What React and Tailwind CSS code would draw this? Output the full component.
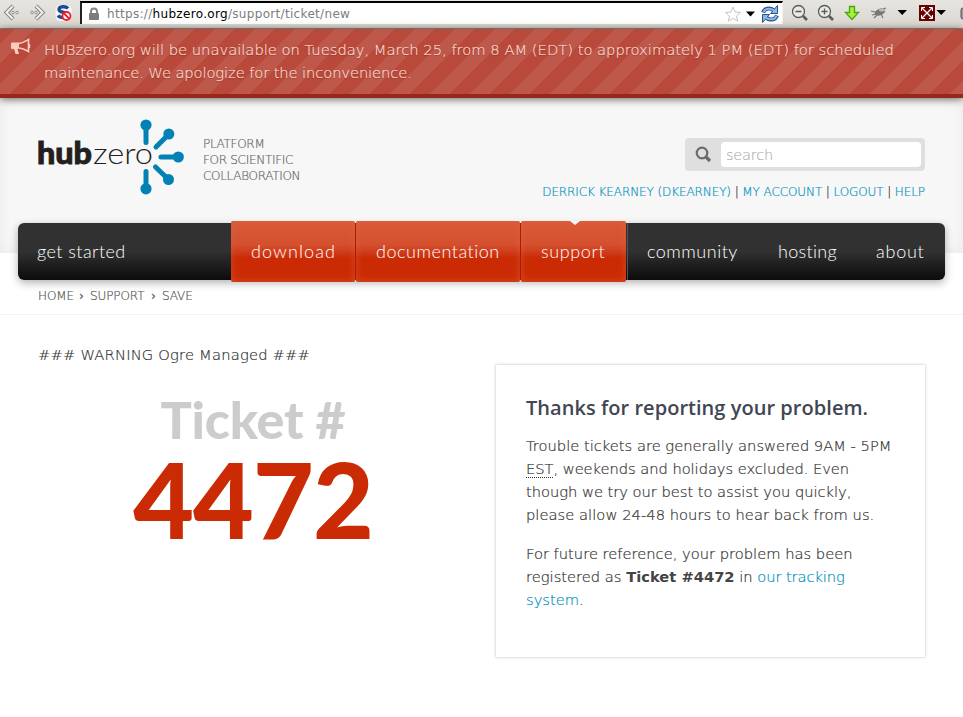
import React from "react";

function Toolbar() {
  return (
    <div className="flex h-[29px] items-center border-b border-[#8c8b86] bg-linear-to-b from-[#e6e5e0] to-[#d9d7cf]">
      <svg className="h-[28px] w-[80px] shrink-0" viewBox="0 0 80 28" fill="none">
        <g stroke="#858581" strokeWidth="4">
          <path d="M13 6 L6.500 12.500 L13 19" />
          <path d="M36 6 L42.500 12.500 L36 19" />
        </g>
        <g stroke="#f2f1ee" strokeWidth="2">
          <path d="M12.700 6.300 L6.500 12.500 L12.700 18.700" />
          <path d="M36.300 6.300 L42.500 12.500 L36.300 18.700" />
        </g>
        <g stroke="#858581" strokeWidth="0.900" fill="#f2f1ee">
          <circle cx="13" cy="12.500" r="1.300" />
          <circle cx="17" cy="12.500" r="1.300" />
          <circle cx="36" cy="12.500" r="1.300" />
          <circle cx="32" cy="12.500" r="1.300" />
        </g>
        <rect x="55.500" y="5" width="16" height="16" rx="5" fill="#f5f7fa" />
        <path d="M68 8.500 C66 6 59 6 59 9.500 C59 13 67 11.500 67 15 C67 18.500 60 18 58 15.500" stroke="#1d4a90" strokeWidth="3.400" />
        <circle cx="66.500" cy="16" r="4" fill="#fff" stroke="#e8202a" strokeWidth="1.800" />
        <path d="M64 13.500 L69 18.500" stroke="#e8202a" strokeWidth="1.800" />
      </svg>
      <div className="mt-[-3px] flex h-[23px] w-[703px] shrink-0 items-center border-t-2 border-r border-l-2 border-t-black border-r-[#f4f3f0] border-l-[#222] bg-white font-['DejaVu_Sans'] text-[12px]">
        <svg className="ml-[6px] h-[14px] w-[12px]" viewBox="0 0 12 14">
          <path d="M3 7 V4.500 a3 3 0 0 1 6 0 V7" fill="none" stroke="#868686" strokeWidth="2" />
          <rect x="1" y="6" width="10" height="7" rx="1" fill="#7c7c7c" />
        </svg>
        <span className="ml-[7px] tracking-[0.32px] whitespace-nowrap text-[#7d7d7d]">
          https://<span className="text-black">hubzero.org</span>/support/ticket/new
        </span>
        <svg className="ml-auto h-[20px] w-[58px]" viewBox="0 0 58 20">
          <path d="M9 3 L11.200 8 L16.500 8.500 L12.500 12 L13.700 17 L9 14.400 L4.300 17 L5.500 12 L1.500 8.500 L6.800 8Z" fill="#fff" stroke="#c4c4c4" />
          <path d="M22 7.500 h9 l-4.500 5z" fill="#000" />
          <g fill="none" stroke="#26548f" strokeWidth="4">
            <path d="M39 8.500 C41 3.500 47 3.500 50 6.500" />
            <path d="M53 11.500 C51 16.500 45 16.500 42 13.500" />
          </g>
          <path d="M53.500 1.500 V9.500 H46.500Z M38.500 18.500 V10.500 H45.500Z" fill="#8db8e6" stroke="#26548f" strokeWidth="1" />
          <g fill="none" stroke="#8db8e6" strokeWidth="2">
            <path d="M39.500 8.200 C41 4 47 3.500 51 7" />
            <path d="M52.500 11.800 C51 16 45 16.500 41 13" />
          </g>
        </svg>
      </div>
      <svg className="h-[28px] w-[180px] shrink-0" viewBox="783 0 180 28" fill="none">
        <g stroke="#5a5c58" strokeWidth="1.300">
          <circle cx="798.500" cy="11.500" r="6" fill="#e9e9e6" />
          <circle cx="824.500" cy="11.500" r="6" fill="#e9e9e6" />
          <path d="M795.500 11.500 h6 M821.500 11.500 h6 M824.500 8.500 v6" />
          <path d="M803 16 L807 20 M829 16 L833 20" strokeWidth="2.600" />
        </g>
        <path d="M849.500 6.500 h5 v6 h4 L852 19.500 L845.500 12.500 h4z" fill="#a4f03a" stroke="#4fa40c" strokeWidth="1.300" />
        <ellipse cx="880" cy="12" rx="5.500" ry="3.300" fill="#777" transform="rotate(-20 880 12)" />
        <path d="M871 11 l6 1.500 M872 15 l5 -1 M877 15 l-3 3 M881 14 l2 4 M883 9 l3 -1" stroke="#777" strokeWidth="1.200" />
        <ellipse cx="882" cy="10" rx="3" ry="1.500" fill="#bbb" />
        <path d="M897.500 10 h9.500 l-4.800 5z M936.500 10 h9.500 l-4.800 5z" fill="#000" />
        <rect x="919" y="5" width="16" height="16" fill="#6b0000" />
        <path d="M922 8 L932 18 M932 8 L922 18" stroke="#fff" strokeWidth="1.300" />
        <path d="M921.500 11 V7.500 H925 M929 7.500 H932.500 V11 M932.500 15 V18.500 H929 M925 18.500 H921.500 V15" stroke="#fff" />
        <rect x="961" y="8" width="6" height="11" rx="2" fill="#999" stroke="#555" />
      </svg>
    </div>
  );
}

function Banner() {
  return (
    <div className="relative z-10 flex h-[69px] border-b-4 border-[#97281a] bg-[#b94a3b] bg-[linear-gradient(135deg,rgba(255,255,255,0.08)_25%,transparent_25%,transparent_50%,rgba(255,255,255,0.08)_50%,rgba(255,255,255,0.08)_75%,transparent_75%)] bg-[size:40px_40px] bg-[position:15px_0] shadow-[0_1px_8px_rgba(0,0,0,0.6)]">
      <svg className="mt-[9px] ml-[10px] h-[18px] w-[21px] shrink-0" viewBox="0 0 21 18">
        <path d="M1 6 C1 5 1.500 4.500 2.500 4.500 H9 V10.500 L7.500 11 L9 16 H5.500 L4 11 H2.500 C1.500 11 1 10.500 1 9.500Z" fill="#fdcabd" />
        <path d="M9 5.500 C13 5 16 3 18.500 1.500 V13.500 C16 12 13 10.300 9 10" fill="none" stroke="#fdcabd" strokeWidth="1.700" />
        <path d="M19.500 6 v4" stroke="#fdcabd" strokeWidth="1.500" />
      </svg>
      <p className="mt-[9px] ml-[13px] font-['DejaVu_Sans'] text-[14.72px] leading-[23px] font-extralight whitespace-nowrap text-[#ffd9cf] [-webkit-text-stroke:0.2px] [text-shadow:0_1px_1px_rgba(0,0,0,0.3)]">
        HUBzero.org will be unavailable on Tuesday, March 25, from 8 AM (EDT) to approximately 1 PM (EDT) for scheduled
        <br />
        <span className="tracking-[-0.11px]">maintenance. We apologize for the inconvenience.</span>
      </p>
    </div>
  );
}

function Logo() {
  return (
    <svg className="h-[78px] w-[150px] shrink-0" viewBox="37 118 150 78">
      <text x="37" y="164" className="font-['Lato'] text-[31px] font-black" fill="#231f20" stroke="#231f20" strokeWidth="0.900" textLength="55" lengthAdjust="spacingAndGlyphs">hub</text>
      <text x="93" y="164" className="font-['Lato'] text-[30px] font-light" fill="#231f20" textLength="60" lengthAdjust="spacingAndGlyphs">zero</text>
      <g stroke="#0282b4" strokeWidth="5" strokeLinecap="round">
        <path d="M146 126 V142.500 M169 134 L156 147 M178 157 H161 M146 189 V171.500 M168 179 L155.500 167" />
      </g>
      <g fill="#0282b4">
        <circle cx="146" cy="125" r="5.600" />
        <circle cx="168.800" cy="134" r="5.500" />
        <circle cx="178.300" cy="157" r="5.600" />
        <circle cx="168.500" cy="179.500" r="5.500" />
        <circle cx="146" cy="188.800" r="5.600" />
      </g>
    </svg>
  );
}

function Header() {
  return (
    <header className="h-[155px] bg-[#f7f7f7] shadow-[inset_0_0_14px_rgba(0,0,0,0.06)]">
      <div className="flex pt-[20px] pr-[38px] pl-[37px]">
        <Logo />
        <p className="mt-[18px] ml-[16px] font-['DejaVu_Sans'] text-[12px] leading-[16px] font-extralight tracking-[-0.3px] text-[#666] [-webkit-text-stroke:0.2px]">
          PLATFORM
          <br />
          FOR SCIENTIFIC
          <br />
          COLLABORATION
        </p>
        <div className="mt-[20px] ml-auto flex flex-col items-end">
          <div className="flex h-[33px] w-[240px] items-center rounded-[4px] bg-[#dfdfdf] pr-1 pl-[10px]">
            <svg className="h-[17px] w-[17px]" viewBox="0 0 17 17" fill="none" stroke="#6b6b6b">
              <circle cx="7" cy="7" r="5.300" strokeWidth="2.200" />
              <path d="M10.500 10.500 L15 15" strokeWidth="3.200" />
            </svg>
            <div className="ml-auto h-[25px] w-[200px] rounded-[4px] bg-white pl-[5px] font-['DejaVu_Sans'] text-[14.6px] leading-[25px] font-extralight tracking-[-0.25px] text-[#aaa] [-webkit-text-stroke:0.1px]">
              search
            </div>
          </div>
          <p className="mt-[13px] font-['DejaVu_Sans'] text-[12px] leading-[16px] font-extralight tracking-[-0.1px] whitespace-nowrap text-[#333] [-webkit-text-stroke:0.2px]">
            <a className="text-[#0091be]">DERRICK KEARNEY (DKEARNEY)</a> | <a className="text-[#0091be]">MY ACCOUNT</a> |{" "}
            <a className="text-[#0091be]">LOGOUT</a> | <a className="text-[#0091be]">HELP</a>
          </p>
        </div>
      </div>
    </header>
  );
}

const red =
  "relative h-[61px] rounded-[2px] bg-linear-to-b from-[#d95a38] from-0% via-[#d5502f] via-38% to-[#ca2b04] to-60% shadow-[inset_0_0_8px_rgba(225,100,70,0.55)] pt-[2px]";

function Nav() {
  return (
    <nav className="relative z-10 mx-[18px] mt-[-30px] flex h-[57px] items-center rounded-[6px] bg-linear-to-b from-[#313131] from-50% to-[#0c0c0c] font-['Lato'] text-[18px] leading-[56px] font-light whitespace-nowrap text-white shadow-[0_3px_8px_rgba(0,0,0,0.3)] [font-variant-ligatures:none]">
      <a className="w-[213px] pb-[2px] pl-[19px] tracking-[0.44px]">get started</a>
      <a className={`${red} w-[124px] pl-[20px] tracking-[1.1px]`}>download</a>
      <span className="h-[57px] w-px bg-[#a81f00]" />
      <a className={`${red} w-[164px] pl-[20px] tracking-[0.53px]`}>documentation</a>
      <span className="h-[57px] w-px bg-[#a81f00]" />
      <a className={`${red} w-[105px] pl-[20px] tracking-[0.6px]`}>
        support
        <svg className="absolute top-0 left-[49px] h-[4px] w-[10px]" viewBox="0 0 10 4">
          <path d="M0 0 H10 L5 4Z" fill="#f7f7f7" />
        </svg>
      </a>
      <span className="ml-px h-[57px] w-px bg-[#555]" />
      <a className="w-[131px] pb-[2px] pl-[19px] tracking-[0.5px]">community</a>
      <a className="w-[98px] pb-[2px] pl-[19px] tracking-[0.3px]">hosting</a>
      <a className="pb-[2px] pl-[19px] tracking-[0.75px]">about</a>
    </nav>
  );
}

function Breadcrumbs() {
  return (
    <div className="flex h-[35px] border-b border-dotted border-[#e8e8e8] pt-[8px] pl-[38px] font-['DejaVu_Sans'] text-[12px] leading-[16px] font-extralight tracking-[-0.1px] text-[#555] [-webkit-text-stroke:0.2px]">
      <span className="w-[41px]">HOME</span>
      <span className="w-[11px] font-normal">›</span>
      <span className="w-[61px]">SUPPORT</span>
      <span className="w-[11px] font-normal">›</span>
      <span>SAVE</span>
    </div>
  );
}

export default function App() {
  return (
    <div className="h-[717px] w-[963px] overflow-hidden bg-white">
      <Toolbar />
      <Banner />
      <Header />
      <Nav />
      <Breadcrumbs />
      <main className="flex pl-[38px] font-['DejaVu_Sans'] text-[14.7px] leading-[23px] font-extralight text-[#333]">
        <section className="w-[458px] pt-[28px]">
          <p className="tracking-[0.2px] [-webkit-text-stroke:0.2px]">### WARNING Ogre Managed ###</p>
          <h2 className="mt-[23px] w-[430px] text-center font-['Lato'] leading-none font-black whitespace-nowrap">
            <span className="block text-[52px] leading-[60px] tracking-[-0.2px] text-[#ccc]">Ticket #</span>
            <span className="block text-[105px] leading-[98px] tracking-[-1px] text-[#ca2b04]">4472</span>
          </h2>
        </section>
        <section className="mt-[50px] h-[292px] w-[429px] px-[30px] pt-[31px] shadow-[0_0_0_1px_rgba(0,0,0,0.04),0_0_4px_rgba(0,0,0,0.16)]">
          <h3 className="font-['Open_Sans'] text-[20px] leading-[24px] font-semibold tracking-[0.04px] whitespace-nowrap text-[#414652]">
            Thanks for reporting your problem.
          </h3>
          <p className="mt-[14px] whitespace-nowrap [-webkit-text-stroke:0.2px]">
            Trouble tickets are generally answered 9AM - 5PM
            <br />
            <span className="tracking-[-0.05px]">
              <abbr className="border-b border-dotted border-[#333] no-underline">EST</abbr>, weekends and holidays excluded. Even
            </span>
            <br />
            <span className="tracking-[-0.03px]">though we try our best to assist you quickly,</span>
            <br />
            <span className="tracking-[0.04px]">please allow 24-48 hours to hear back from us.</span>
          </p>
          <p className="mt-[16px] whitespace-nowrap [-webkit-text-stroke:0.2px]">
            For future reference, your problem has been
            <br />
            registered as <strong className="font-bold text-[#444] [-webkit-text-stroke:0]">Ticket #4472</strong> in{" "}
            <a className="tracking-[-0.1px] text-[#0091be]">our tracking</a>
            <br />
            <a className="text-[#0091be]">system</a>.
          </p>
        </section>
      </main>
    </div>
  );
}
